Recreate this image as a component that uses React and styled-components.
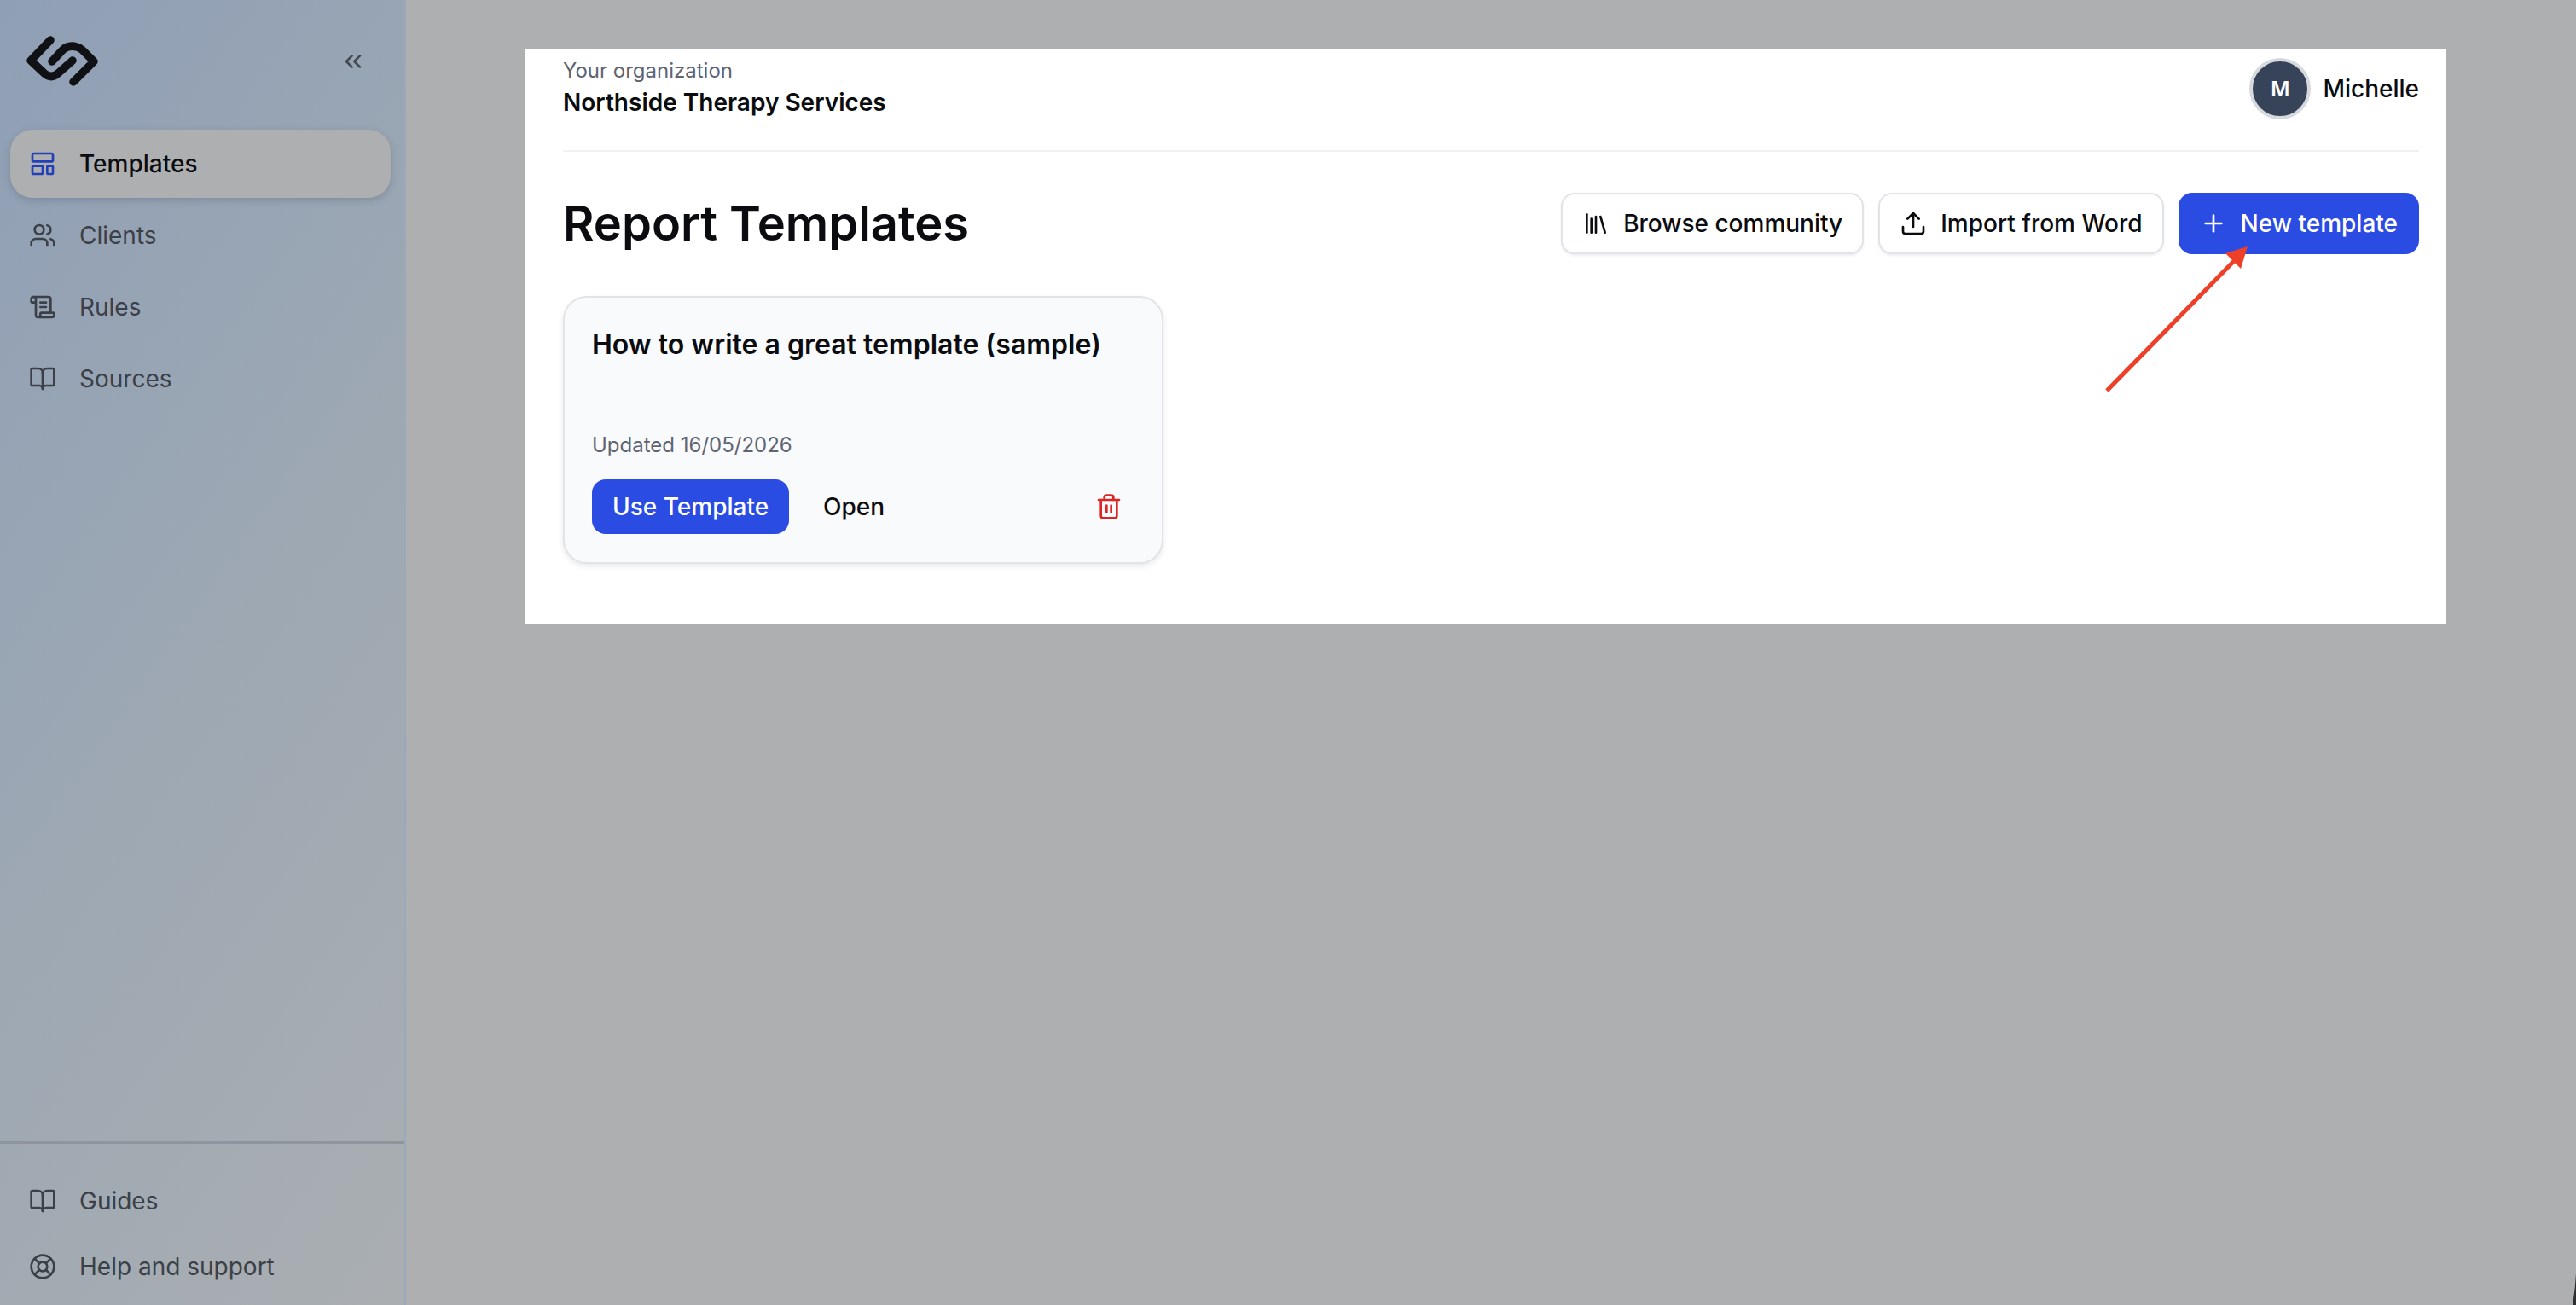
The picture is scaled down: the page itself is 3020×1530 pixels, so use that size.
import React from "react";
import styled, { createGlobalStyle } from "styled-components";
import {
  BookOpen,
  ChevronsLeft,
  LayoutTemplate,
  Library,
  LifeBuoy,
  Plus,
  ScrollText,
  Trash2,
  Upload,
  Users,
} from "lucide-react";

const GlobalStyle = createGlobalStyle`
  html, body {
    margin: 0;
    padding: 0;
    background: #aeafb1;
    font-family: Inter, "Liberation Sans", sans-serif;
    overflow: hidden;
  }
  * { box-sizing: border-box; }
`;

const Page = styled.div`
  position: relative;
  display: flex;
  width: 3020px;
  height: 1530px;
  background: #aeafb1;
  overflow: hidden;
`;

const Sidebar = styled.aside`
  display: flex;
  flex-direction: column;
  flex: 0 0 476px;
  height: 100%;
  background: linear-gradient(125deg, #8f9fb5 0%, #9ba7b3 45%, #aaaeb1 100%);
  border-right: 2px solid #9ba8ba;
`;

const SidebarHead = styled.div`
  display: flex;
  align-items: center;
  justify-content: space-between;
  height: 152px;
  padding: 0 44px 8px 28px;
`;

const Logo = styled.svg`
  width: 90px;
  height: 64px;
  display: block;
`;

const CollapseButton = styled.button`
  display: flex;
  padding: 0;
  border: none;
  background: none;
  color: #454a52;
`;

const NavList = styled.nav`
  display: flex;
  flex-direction: column;
  gap: 4px;
  padding: 0 16px 0 12px;
`;

const NavItem = styled.a`
  display: flex;
  align-items: center;
  gap: 27px;
  height: ${(p) => (p.$short ? "73px" : "80px")};
  padding-left: 22px;
  border-radius: 26px;
  font-size: 28px;
  font-weight: ${(p) => (p.$active ? 500 : 400)};
  color: ${(p) => (p.$active ? "#0b0c10" : "#3b4048")};
  background: ${(p) => (p.$active ? "#aeafb1" : "transparent")};
  box-shadow: ${(p) => (p.$active ? "0 3px 8px rgba(70, 80, 100, 0.28)" : "none")};

  svg {
    flex: none;
    color: ${(p) => (p.$active ? "#2340b8" : "#3b4048")};
  }
`;

const SidebarFoot = styled.div`
  margin-top: auto;
  padding: 30px 0 9px;
  border-top: 3px solid #8f959e;
`;

const Main = styled.main`
  flex: 1;
  padding: 58px 0 0 140px;
`;

const Panel = styled.section`
  width: 2252px;
  padding: 0 32px 71px 44px;
  background: #ffffff;
`;

const TopBar = styled.header`
  display: flex;
  justify-content: space-between;
  height: 120px;
  padding-top: 8px;
  border-bottom: 2px solid #f0f1f3;
`;

const OrgLabel = styled.div`
  font-size: 24px;
  line-height: 34px;
  color: #5f6472;
`;

const OrgName = styled.div`
  font-size: 28px;
  line-height: 40px;
  font-weight: 600;
  color: #0b0c10;
`;

const UserBlock = styled.div`
  display: flex;
  align-items: flex-start;
  gap: 14px;
  padding-top: 2px;
`;

const Avatar = styled.div`
  display: flex;
  align-items: center;
  justify-content: center;
  width: 72px;
  height: 72px;
  border: 4px solid #d6d9de;
  border-radius: 50%;
  background: #374359;
  color: #ffffff;
  font-size: 24px;
  font-weight: 600;
`;

const UserName = styled.span`
  font-size: 28px;
  line-height: 72px;
  font-weight: 500;
  color: #0b0c10;
`;

const TitleRow = styled.div`
  display: flex;
  align-items: center;
  justify-content: space-between;
  margin-top: 48px;
`;

const Heading = styled.h1`
  margin: 0;
  font-size: 56px;
  line-height: 70px;
  font-weight: 600;
  color: #0b0c10;
`;

const Actions = styled.div`
  display: flex;
  gap: 17px;
`;

const ActionButton = styled.button`
  display: flex;
  align-items: center;
  gap: 16px;
  height: 72px;
  padding: 0 23px;
  border: 2px solid ${(p) => (p.$primary ? "#2a4ce3" : "#e2e3e8")};
  border-radius: 16px;
  background: ${(p) => (p.$primary ? "#2a4ce3" : "#ffffff")};
  color: ${(p) => (p.$primary ? "#ffffff" : "#0b0c10")};
  font-family: inherit;
  font-size: 28px;
  font-weight: 500;
  box-shadow: ${(p) => (p.$primary ? "none" : "0 2px 3px rgba(30, 40, 70, 0.08)")};
`;

const Card = styled.article`
  display: flex;
  flex-direction: column;
  width: 704px;
  height: 314px;
  margin-top: 49px;
  padding: 35px 32px 33px 32px;
  border: 2px solid #e3e4e8;
  border-radius: 28px;
  background: #f9fafb;
  box-shadow: 0 3px 6px rgba(30, 40, 70, 0.1);
`;

const CardTitle = styled.h2`
  margin: 0;
  font-size: 32px;
  line-height: 40px;
  font-weight: 600;
  color: #0b0c10;
`;

const CardDate = styled.div`
  margin-top: auto;
  margin-bottom: -1px;
  font-size: 24px;
  line-height: 34px;
  color: #5f6472;
`;

const CardActions = styled.div`
  display: flex;
  align-items: center;
  margin-top: 24px;
`;

const UseButton = styled.button`
  height: 64px;
  padding: 0 24px;
  border: none;
  border-radius: 16px;
  background: #2a4ce3;
  color: #ffffff;
  font-family: inherit;
  font-size: 28px;
  font-weight: 500;
`;

const OpenButton = styled.button`
  margin-left: 40px;
  padding: 0;
  border: none;
  background: none;
  color: #0b0c10;
  font-family: inherit;
  font-size: 28px;
  font-weight: 500;
`;

const DeleteButton = styled.button`
  display: flex;
  margin-left: auto;
  margin-right: 14px;
  padding: 0;
  border: none;
  background: none;
  color: #dc2626;
`;

// annotation drawn over the screenshot
const Arrow = styled.svg`
  position: absolute;
  left: 0;
  top: 0;
  width: 3020px;
  height: 1530px;
  pointer-events: none;
`;

const navItems = [
  { label: "Templates", Icon: LayoutTemplate, active: true },
  { label: "Clients", Icon: Users },
  { label: "Rules", Icon: ScrollText },
  { label: "Sources", Icon: BookOpen },
];

const footItems = [
  { label: "Guides", Icon: BookOpen },
  { label: "Help and support", Icon: LifeBuoy },
];

export default function App() {
  return (
    <Page>
      <GlobalStyle />
      <Sidebar>
        <SidebarHead>
          <Logo viewBox="28 40 90 64" fill="none" stroke="#101114" strokeWidth="9.5" strokeLinecap="round" strokeLinejoin="round">
            <path d="M59 47 L36 71 L52 86 Q60 93 68 86 L85 71" />
            <path d="M61 72 L73 59 Q80 52 90 55 Q94 56 97 59 L110 72 L86 96" />
          </Logo>
          <CollapseButton>
            <ChevronsLeft size={32} strokeWidth={2} />
          </CollapseButton>
        </SidebarHead>
        <NavList>
          {navItems.map(({ label, Icon, active }) => (
            <NavItem key={label} $active={active}>
              <Icon size={32} strokeWidth={2} />
              {label}
            </NavItem>
          ))}
        </NavList>
        <SidebarFoot>
          <NavList>
            {footItems.map(({ label, Icon }) => (
              <NavItem key={label} $short>
                <Icon size={32} strokeWidth={2} />
                {label}
              </NavItem>
            ))}
          </NavList>
        </SidebarFoot>
      </Sidebar>
      <Main>
        <Panel>
          <TopBar>
            <div>
              <OrgLabel>Your organization</OrgLabel>
              <OrgName>Northside Therapy Services</OrgName>
            </div>
            <UserBlock>
              <Avatar>M</Avatar>
              <UserName>Michelle</UserName>
            </UserBlock>
          </TopBar>
          <TitleRow>
            <Heading>Report Templates</Heading>
            <Actions>
              <ActionButton>
                <Library size={32} strokeWidth={2} />
                Browse community
              </ActionButton>
              <ActionButton>
                <Upload size={32} strokeWidth={2} />
                Import from Word
              </ActionButton>
              <ActionButton $primary>
                <Plus size={32} strokeWidth={2} />
                New template
              </ActionButton>
            </Actions>
          </TitleRow>
          <Card>
            <CardTitle>How to write a great template (sample)</CardTitle>
            <CardDate>Updated 16/05/2026</CardDate>
            <CardActions>
              <UseButton>Use Template</UseButton>
              <OpenButton>Open</OpenButton>
              <DeleteButton>
                <Trash2 size={32} strokeWidth={2} />
              </DeleteButton>
            </CardActions>
          </Card>
        </Panel>
      </Main>
      <Arrow viewBox="0 0 3020 1530">
        <line x1="2470" y1="458" x2="2622" y2="303" stroke="#ee4028" strokeWidth="5" />
        <polygon points="2635,289 2609,297 2627,315" fill="#ee4028" />
        <path d="M3020 1493 Q3019 1512 3016 1530 L3020 1530 Z" fill="#2c2f30" />
      </Arrow>
    </Page>
  );
}
